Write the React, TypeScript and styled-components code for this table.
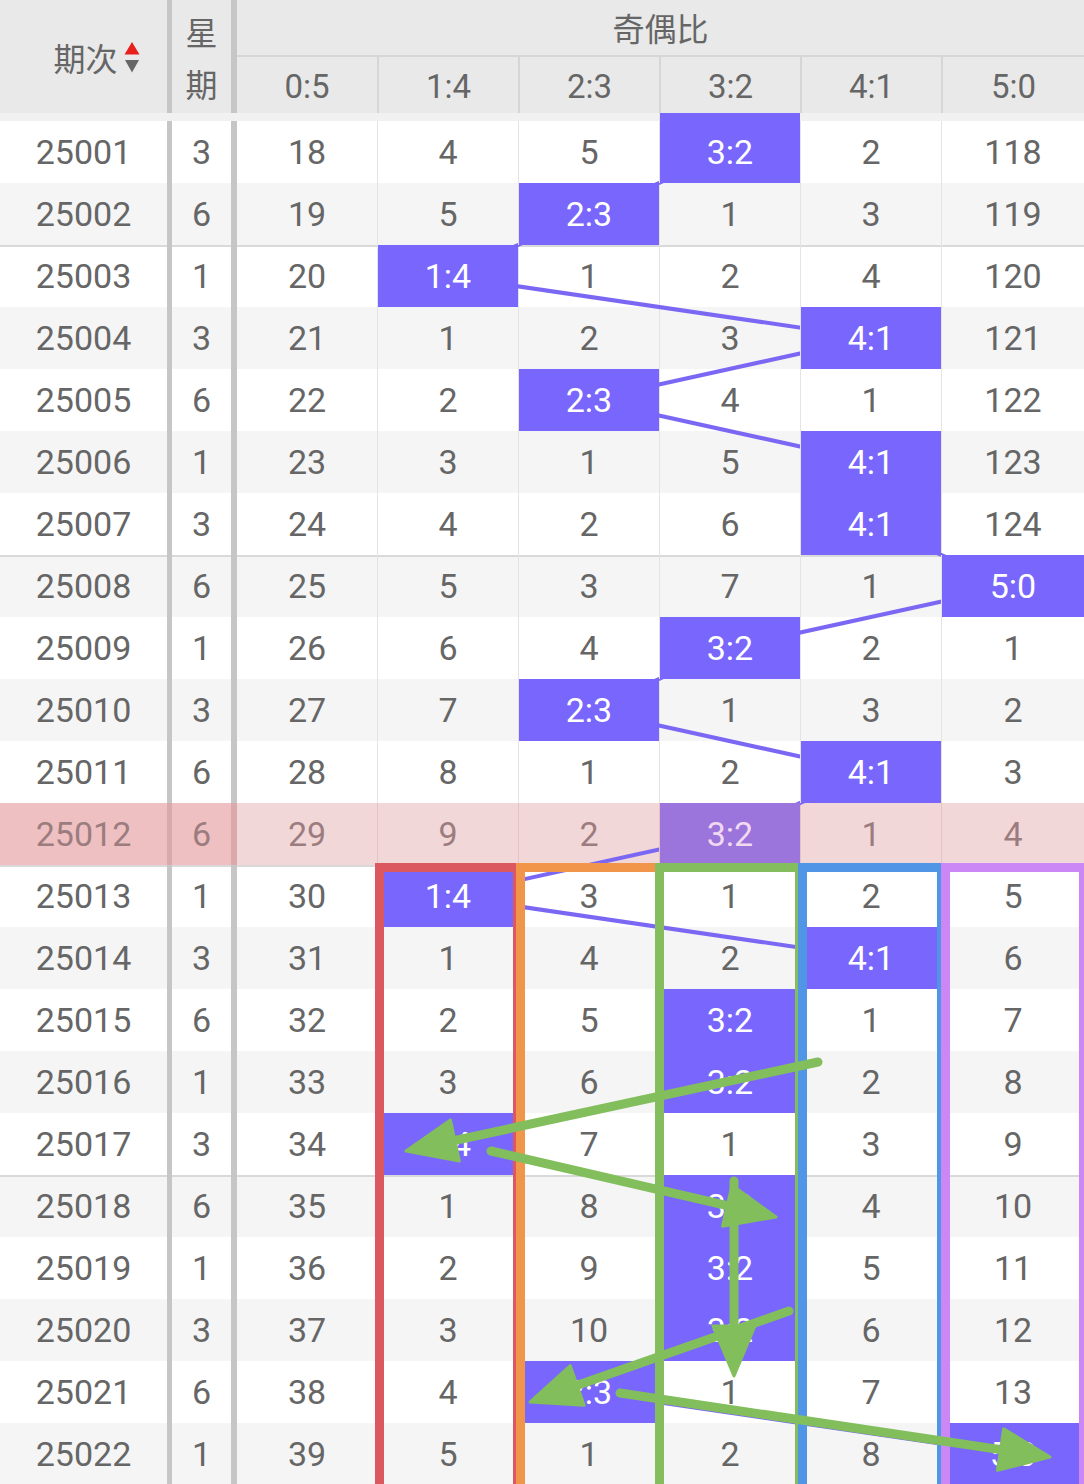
import React from "react";
import styled, { createGlobalStyle } from "styled-components";

const GlobalStyle = createGlobalStyle`
  html, body { margin: 0; padding: 0; background: #ffffff; }
  body {
    width: 1084px;
    height: 1484px;
    overflow: hidden;
    font-family: Roboto, "Noto Sans CJK SC", sans-serif;
    color: #666666;
  }
  * { box-sizing: border-box; }
`;

const COLS = ["0:5", "1:4", "2:3", "3:2", "4:1", "5:0"];

type RowData = { id: string; week: number; vals: number[]; hit: number };

const RAW: [string, number, number[], number][] = [
  ["25001", 3, [18, 4, 5, 0, 2, 118], 3],
  ["25002", 6, [19, 5, 0, 1, 3, 119], 2],
  ["25003", 1, [20, 0, 1, 2, 4, 120], 1],
  ["25004", 3, [21, 1, 2, 3, 0, 121], 4],
  ["25005", 6, [22, 2, 0, 4, 1, 122], 2],
  ["25006", 1, [23, 3, 1, 5, 0, 123], 4],
  ["25007", 3, [24, 4, 2, 6, 0, 124], 4],
  ["25008", 6, [25, 5, 3, 7, 1, 0], 5],
  ["25009", 1, [26, 6, 4, 0, 2, 1], 3],
  ["25010", 3, [27, 7, 0, 1, 3, 2], 2],
  ["25011", 6, [28, 8, 1, 2, 0, 3], 4],
  ["25012", 6, [29, 9, 2, 0, 1, 4], 3],
  ["25013", 1, [30, 0, 3, 1, 2, 5], 1],
  ["25014", 3, [31, 1, 4, 2, 0, 6], 4],
  ["25015", 6, [32, 2, 5, 0, 1, 7], 3],
  ["25016", 1, [33, 3, 6, 0, 2, 8], 3],
  ["25017", 3, [34, 0, 7, 1, 3, 9], 1],
  ["25018", 6, [35, 1, 8, 0, 4, 10], 3],
  ["25019", 1, [36, 2, 9, 0, 5, 11], 3],
  ["25020", 3, [37, 3, 10, 0, 6, 12], 3],
  ["25021", 6, [38, 4, 0, 1, 7, 13], 2],
  ["25022", 1, [39, 5, 1, 2, 8, 0], 5],
];

const ROWS: RowData[] = RAW.map(([id, week, vals, hit]) => ({ id, week, vals, hit }));
const HIGHLIGHT = "25012";

const COL_EDGES = [237, 377, 518, 659, 800, 941, 1084];
const colCenter = (c: number) => (COL_EDGES[c] + COL_EDGES[c + 1]) / 2;
const rowCenter = (i: number) => 152 + 62 * i;

const Page = styled.div`
  position: relative;
  width: 1084px;
  height: 1484px;
  overflow: hidden;
`;

const Grid = `
  display: grid;
  grid-template-columns: 172px 65px 140px 141px 141px 141px 141px 1fr;
`;

const Header = styled.div`
  ${Grid}
  grid-template-rows: 57px 56px;
  background: #e9e9e9;
`;

const HeadCell = styled.div<{ $sep?: number; $rows?: string; $cols?: string; $divider?: boolean }>`
  display: flex;
  align-items: center;
  justify-content: center;
  font-family: "Noto Sans CJK SC", sans-serif;
  font-size: 32px;
  color: #666;
  grid-row: ${(p) => p.$rows || "auto"};
  grid-column: ${(p) => p.$cols || "auto"};
  border-right: ${(p) => (p.$sep ? `${p.$sep}px solid #c6c6c6` : "none")};
  border-left: ${(p) => (p.$divider ? "2px solid #d6d6d6" : "none")};
`;

const IdHead = styled(HeadCell)`
  padding-left: 26px;
`;

const GroupHead = styled(HeadCell)`
  border-bottom: 2px solid #d6d6d6;
  padding-bottom: 2px;
`;

const SubHead = styled(HeadCell)`
  font-family: Roboto, sans-serif;
  font-size: 33px;
  padding-top: 2px;
`;

const WeekHead = styled(HeadCell)`
  flex-direction: column;
  line-height: 52px;
`;

const SortIcon = styled.svg`
  margin-left: 6px;
  margin-top: 2px;
`;

const Row = styled.div<{ $alt: boolean; $first: boolean; $group: boolean; $hl: boolean }>`
  ${Grid}
  height: ${(p) => (p.$first ? 70 : 62)}px;
  padding-top: ${(p) => (p.$first ? 8 : 0)}px;
  background: ${(p) =>
    p.$first
      ? "linear-gradient(#f1f1f1 0, #f1f1f1 8px, #ffffff 8px)"
      : p.$group
      ? `linear-gradient(#d9d9d9 0, #d9d9d9 2px, ${p.$alt ? "#f5f5f5" : "#ffffff"} 2px)`
      : p.$hl
      ? "#f2d7d9"
      : p.$alt
      ? "#f5f5f5"
      : "#ffffff"};
`;

const Cell = styled.div<{ $hl: boolean }>`
  display: flex;
  align-items: center;
  justify-content: center;
  font-size: 34px;
  color: ${(p) => (p.$hl ? "#9c7d7f" : "#666666")};
`;

const IdCell = styled(Cell)`
  border-right: 5px solid ${(p) => (p.$hl ? "#d9a9ab" : "#c6c6c6")};
  background: ${(p) => (p.$hl ? "#efc0c1" : "transparent")};
`;

const WeekCell = styled(Cell)`
  border-right: 6px solid ${(p) => (p.$hl ? "#d9a9ab" : "#c6c6c6")};
  background: ${(p) => (p.$hl ? "#efc0c1" : "transparent")};
`;

const ValCell = styled(Cell)<{ $lead: boolean }>`
  border-left: ${(p) => (p.$lead ? "none" : `1px solid ${p.$hl ? "#e3c3c5" : "#e4e4e4"}`)};
`;

const HitCell = styled(ValCell)`
  position: relative;
  z-index: 2;
  background: ${(p) => (p.$hl ? "#9b74dc" : "#7866fd")};
  color: ${(p) => (p.$hl ? "#f1d9f0" : "#ffffff")};
`;

const FirstRowHit = styled(HitCell)`
  margin-top: -8px;
  padding-top: 8px;
`;

const Overlay = styled.svg<{ $z: number }>`
  position: absolute;
  left: 0;
  top: 0;
  z-index: ${(p) => p.$z};
  pointer-events: none;
`;

const GREEN = "#82be5c";

function Arrow({ x1, y1, x2, y2 }: { x1: number; y1: number; x2: number; y2: number }) {
  const dx = x2 - x1;
  const dy = y2 - y1;
  const len = Math.hypot(dx, dy);
  const ux = dx / len;
  const uy = dy / len;
  const L = 50;
  const W = 21;
  const bx = x2 - ux * L;
  const by = y2 - uy * L;
  const px = -uy;
  const py = ux;
  const pts = `${x2},${y2} ${bx + px * W},${by + py * W} ${bx - px * W},${by - py * W}`;
  return (
    <g>
      <line x1={x1} y1={y1} x2={x2 - ux * L * 0.6} y2={y2 - uy * L * 0.6} stroke={GREEN} strokeWidth={9} strokeLinecap="round" />
      <polygon points={pts} fill={GREEN} stroke={GREEN} strokeWidth={3} strokeLinejoin="round" />
    </g>
  );
}

const BOXES = [
  { x: 375, w: 147, c: "#dc5860" },
  { x: 516, w: 148, c: "#f0954a" },
  { x: 655, w: 149, c: "#84bd5e" },
  { x: 798, w: 148, c: "#5195e6" },
  { x: 941, w: 147, c: "#cb87f5" },
];

export default function App() {
  const trend = ROWS.map((r, i) => `${colCenter(r.hit)},${rowCenter(i)}`).join(" ");
  return (
    <>
      <GlobalStyle />
      <Page>
        <Header>
          <IdHead $rows="1 / 3" $cols="1" $sep={5}>
            期次
            <SortIcon width="16" height="34" viewBox="0 0 16 34">
              <polygon points="8,1 15.5,13.5 0.5,13.5" fill="#e8201c" />
              <polygon points="1,19 15,19 8,31.5" fill="#666666" />
            </SortIcon>
          </IdHead>
          <WeekHead $rows="1 / 3" $cols="2" $sep={6}>
            <span>星</span>
            <span>期</span>
          </WeekHead>
          <GroupHead $rows="1" $cols="3 / 9">奇偶比</GroupHead>
          {COLS.map((c, i) => (
            <SubHead key={c} $rows="2" $divider={i > 0}>
              {c}
            </SubHead>
          ))}
        </Header>
        {ROWS.map((r, i) => {
          const hl = r.id === HIGHLIGHT;
          const first = i === 0;
          return (
            <Row key={r.id} $alt={i % 2 === 1} $first={first} $group={i % 5 === 2 && !hl} $hl={hl}>
              <IdCell $hl={hl}>{r.id}</IdCell>
              <WeekCell $hl={hl}>{r.week}</WeekCell>
              {r.vals.map((v, c) => {
                if (c === r.hit) {
                  const Comp = first ? FirstRowHit : HitCell;
                  return (
                    <Comp key={c} $hl={hl} $lead={c === 0}>
                      {COLS[c]}
                    </Comp>
                  );
                }
                return (
                  <ValCell key={c} $hl={hl} $lead={c === 0}>
                    {v}
                  </ValCell>
                );
              })}
            </Row>
          );
        })}
        <Overlay $z={1} width={1084} height={1484} viewBox="0 0 1084 1484">
          <polyline points={trend} fill="none" stroke="#7a68f4" strokeWidth={4} strokeLinejoin="round" />
        </Overlay>
        <Overlay $z={3} width={1084} height={1484} viewBox="0 0 1084 1484">
          {BOXES.map((b) => (
            <rect key={b.c} x={b.x + 4.5} y={863 + 4.5} width={b.w - 9} height={630} fill="none" stroke={b.c} strokeWidth={9} />
          ))}
          <Arrow x1={818} y1={1062} x2={406} y2={1151} />
          <Arrow x1={491} y1={1151} x2={776} y2={1217} />
          <Arrow x1={734} y1={1181} x2={734} y2={1376} />
          <Arrow x1={789} y1={1311} x2={530} y2={1402} />
          <Arrow x1={620} y1={1393} x2={1050} y2={1457} />
        </Overlay>
      </Page>
    </>
  );
}
